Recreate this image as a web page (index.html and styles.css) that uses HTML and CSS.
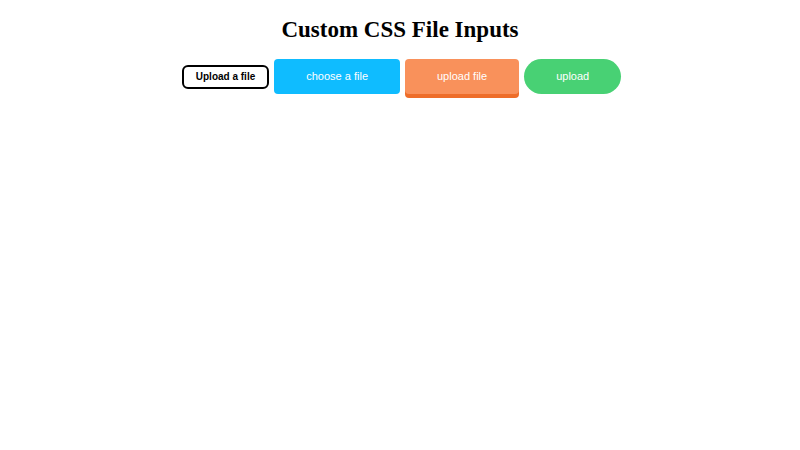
FILE: index.html
```html
<!DOCTYPE html>
<html lang="en">
<head>
    <meta charset="UTF-8">
    <meta name="viewport" content="width=device-width, initial-scale=1.0">
    <title>Custom CSS File Inputs</title>
    <link rel="stylesheet" href="styles.css">
</head>
<body>

    <h1>Custom CSS File Inputs</h1>

    <div class="uploads">
        <!-- Outlined -->
        <input type="file" id="file-outline" class="file-input">
        <label for="file-outline" class="btn btn-outline">Upload a file</label>

        <!-- Flat -->
        <input type="file" id="file-flat" class="file-input">
        <label for="file-flat" class="btn btn-flat">choose a file</label>

        <!-- 3D -->
        <input type="file" id="file-raised" class="file-input">
        <label for="file-raised" class="btn btn-raised">upload file</label>

        <!-- Rounded -->
        <input type="file" id="file-round" class="file-input">
        <label for="file-round" class="btn btn-round">upload</label>
    </div>

</body>
</html>
```

FILE: styles.css
```css
body {
    margin: 0;
    padding: 16px 0;
    background-color: #fff;
    font-family: "Liberation Serif", "Times New Roman", serif;
}

h1 {
    margin: 0 0 16px;
    font-size: 23px;
    line-height: 27px;
    text-align: center;
}

.uploads {
    display: flex;
    flex-wrap: wrap;
    justify-content: center;
    align-items: center;
    gap: 5px;
    padding-left: 3px;
}

/* Hide the native control, the label is the button */
.file-input {
    position: absolute;
    width: 1px;
    height: 1px;
    overflow: hidden;
    opacity: 0;
}

.btn {
    padding: 11px 32px;
    font-family: "Liberation Sans", Arial, sans-serif;
    font-size: 11px;
    line-height: 13px;
    color: #fff;
    cursor: pointer;
}

.btn-outline {
    padding: 4px 12px;
    border: 2px solid #000;
    border-radius: 6px;
    font-size: 10px;
    font-weight: bold;
    line-height: 12px;
    color: #000;
}

.btn-flat {
    background-color: #0fbcff;
    border-radius: 4px;
}

.btn-raised {
    background-color: #f9915b;
    border-radius: 4px;
    box-shadow: 0 4px #ee6d29;
}

.btn-round {
    background-color: #48d174;
    border-radius: 20px;
}

.file-input:focus + .btn {
    outline: 1px dotted #000;
}
```
